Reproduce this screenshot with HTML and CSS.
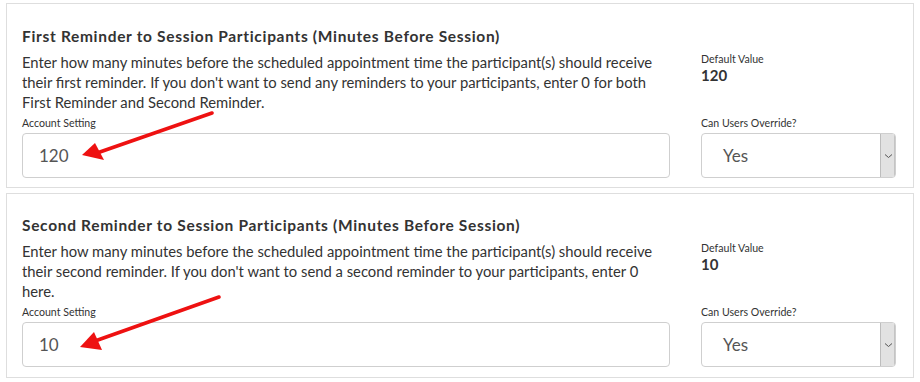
FILE: index.html
```html
<!DOCTYPE html>
<html>
<head>
<meta charset="utf-8">
<link rel="stylesheet" href="styles.css">
</head>
<body>
<div class="page">
  <section class="panel">
    <h3 class="title">First Reminder to Session Participants (Minutes Before Session)</h3>
    <p class="desc">Enter how many minutes before the scheduled appointment time the participant(s) should receive their first reminder. If you don't want to send any reminders to your participants, enter 0 for both First Reminder and Second Reminder.</p>
    <div class="default">
      <div class="small">Default Value</div>
      <div class="defval">120</div>
    </div>
    <div class="field">
      <div class="small">Account Setting</div>
      <div class="input">120</div>
    </div>
    <div class="field">
      <div class="small">Can Users Override?</div>
      <div class="select"><span class="selval">Yes</span><span class="caret"><svg width="9" height="6" viewBox="0 0 9 6"><path d="M1 1.5 L4.5 4.5 L8 1.5" fill="none" stroke="#555" stroke-width="1"/></svg></span></div>
    </div>
    <svg class="arrow a1" width="220" height="70" viewBox="0 0 220 70">
      <line x1="205" y1="3" x2="90" y2="43" stroke="#ee1111" stroke-width="3.6" stroke-linecap="round"/>
      <polygon points="75,45 88,33 97,50" fill="#ee1111"/>
    </svg>
  </section>
  <section class="panel">
    <h3 class="title">Second Reminder to Session Participants (Minutes Before Session)</h3>
    <p class="desc">Enter how many minutes before the scheduled appointment time the participant(s) should receive their second reminder. If you don't want to send a second reminder to your participants, enter 0 here.</p>
    <div class="default">
      <div class="small">Default Value</div>
      <div class="defval">10</div>
    </div>
    <div class="field">
      <div class="small">Account Setting</div>
      <div class="input">10</div>
    </div>
    <div class="field">
      <div class="small">Can Users Override?</div>
      <div class="select"><span class="selval">Yes</span><span class="caret"><svg width="9" height="6" viewBox="0 0 9 6"><path d="M1 1.5 L4.5 4.5 L8 1.5" fill="none" stroke="#555" stroke-width="1"/></svg></span></div>
    </div>
    <svg class="arrow a2" width="220" height="70" viewBox="0 0 220 70">
      <line x1="212" y1="5" x2="88" y2="49" stroke="#ee1111" stroke-width="3.6" stroke-linecap="round"/>
      <polygon points="73,55 87,40 95,58" fill="#ee1111"/>
    </svg>
  </section>
</div>
</body>
</html>
```
FILE: styles.css
```css
html, body {
  margin: 0;
  padding: 0;
  background: #fff;
}
body {
  font-family: Lato, "Open Sans", sans-serif;
  color: #333;
}
.page {
  padding: 3px 6px 0 6px;
  display: flex;
  flex-direction: column;
  gap: 5px;
  width: 908px;
}
.panel {
  position: relative;
  border: 1px solid #dedede;
  height: 183px;
  box-sizing: content-box;
  padding: 0 16px 0 15px;
  display: grid;
  grid-template-columns: 648px 195px;
  grid-template-rows: auto auto auto;
  column-gap: 31px;
  align-content: start;
}
.panel + .panel .title {
  margin-top: 21px;
}
.title {
  grid-column: 1 / 2;
  margin: 22px 0 0 0;
  font-size: 15.5px;
  letter-spacing: 0.68px;
  font-weight: bold;
  line-height: 20px;
  color: #333;
  white-space: nowrap;
}
.desc {
  grid-column: 1;
  margin: 6px 0 0 0;
  font-size: 14.8px;
  line-height: 20px;
}
.default {
  grid-column: 2;
  padding-top: 6px;
}
.small {
  font-size: 10.6px;
  line-height: 14px;
}
.defval {
  font-size: 15px;
  font-weight: bold;
  line-height: 18px;
}
.field {
  margin-top: 4px;
}
.small + .input, .small + .select {
  margin-top: 3px;
}
.input {
  height: 43px;
  border: 1px solid #cfcfcf;
  border-radius: 4px;
  box-sizing: content-box;
  padding-left: 16px;
  font-size: 17px;
  line-height: 43px;
  color: #555;
}
.select {
  height: 43px;
  border: 1px solid #cfcfcf;
  border-radius: 4px;
  display: flex;
  overflow: hidden;
}
.selval {
  flex: 1;
  padding-left: 21px;
  font-size: 17px;
  line-height: 43px;
  color: #555;
}
.caret {
  width: 14px;
  background: #e2e2e2;
  border-left: 1px solid #bdbdbd;
  box-shadow: inset -1px 0 0 #c4c4c4;
  display: flex;
  align-items: center;
  justify-content: center;
}
.arrow {
  position: absolute;
  left: 0;
  pointer-events: none;
}
.a1 { top: 106px; }
.a2 { top: 98px; }
```
